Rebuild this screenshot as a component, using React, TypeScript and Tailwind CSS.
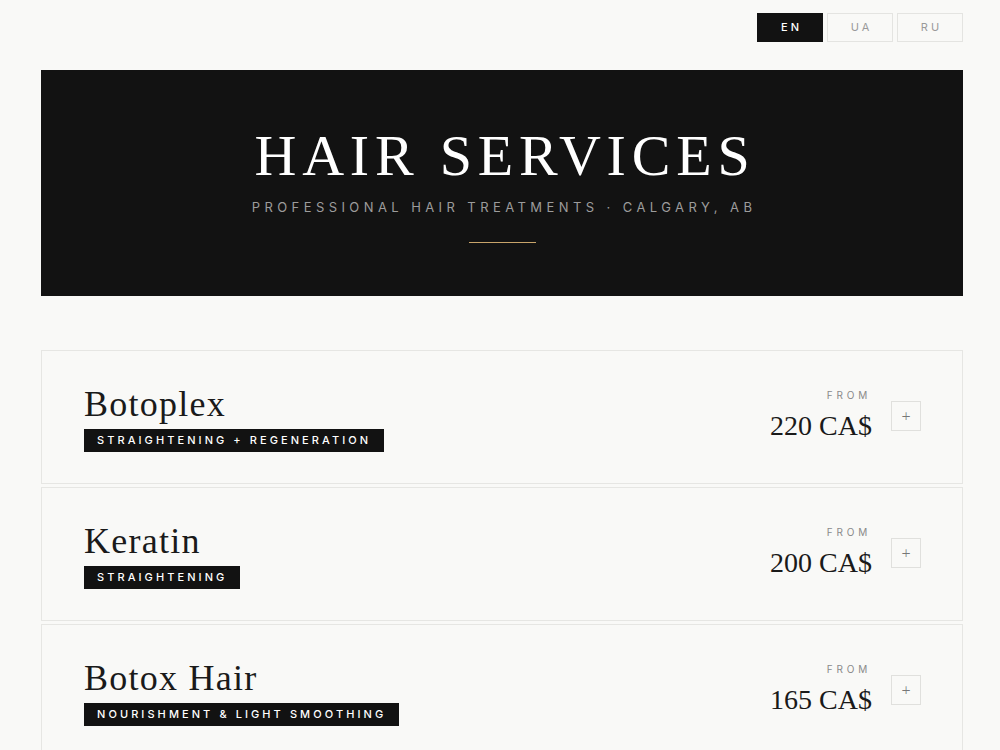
import { useState } from "react";

type Service = {
  name: string;
  tag: string;
  price: number;
};

const services: Service[] = [
  { name: "Botoplex", tag: "Straightening + Regeneration", price: 220 },
  { name: "Keratin", tag: "Straightening", price: 200 },
  { name: "Botox Hair", tag: "Nourishment & Light Smoothing", price: 165 },
];

const langs = ["EN", "UA", "RU"];

const serif = "font-['Liberation_Serif',serif]";
const sans = "font-['Inter','DejaVu_Sans',sans-serif]";

function LangSwitch() {
  const [lang, setLang] = useState("EN");
  return (
    <div className="flex justify-end gap-[4px] pt-[13px]">
      {langs.map((l) => (
        <button
          key={l}
          onClick={() => setLang(l)}
          className={`${sans} h-[29px] w-[66px] border text-[11px] tracking-[0.28em] pl-[3px] ${
            l === lang
              ? "bg-[#121212] border-[#121212] text-white font-medium"
              : "bg-[#f9f9f7] border-[#e4e4e1] text-[#9a9a9a]"
          }`}
        >
          {l}
        </button>
      ))}
    </div>
  );
}

function ServiceCard({ s }: { s: Service }) {
  return (
    <div className="flex h-[134px] items-center justify-between border border-[#e6e6e3] bg-[#f9f9f7] pl-[42px] pr-[41px]">
      <div className="flex flex-col items-start">
        <h2 className={`${serif} text-[36px] leading-[44px] tracking-[0.035em] text-[#1a1a1a]`}>{s.name}</h2>
        <span
          className={`${sans} mt-[3px] bg-[#121212] px-[13px] py-[5px] text-[11px] font-medium uppercase leading-[13px] tracking-[0.28em] text-white`}
        >
          {s.tag}
        </span>
      </div>
      <div className="flex items-center gap-[19px]">
        <div className="flex flex-col items-end">
          <span className={`${sans} text-[10px] tracking-[0.38em] text-[#8a8a8a] mr-[1px] -mt-[3px]`}>FROM</span>
          <span className={`${serif} text-[28px] leading-[34px] text-[#1a1a1a] mt-[6px]`}>{s.price} CA$</span>
        </div>
        <button className="flex h-[30px] w-[30px] items-center justify-center border border-[#e0e0dd] text-[16px] font-light text-[#777] mb-[2px]">
          +
        </button>
      </div>
    </div>
  );
}

export default function App() {
  return (
    <div className="min-h-screen bg-[#f9f9f7]">
      <div className="ml-[41px] w-[922px]">
        <LangSwitch />
        <header className="mt-[28px] flex h-[226px] flex-col items-center bg-[#121212] pt-[57px]">
          <h1 className={`${serif} text-[58px] leading-[58px] tracking-[0.1em] text-white pl-[6px]`}>HAIR SERVICES</h1>
          <p className={`${sans} mt-[13px] text-[13px] tracking-[0.34em] text-[#9c9c9c] pl-[4px]`}>
            PROFESSIONAL HAIR TREATMENTS · CALGARY, AB
          </p>
          <div className="mt-[24px] h-px w-[67px] bg-[#c8a46a]" />
        </header>
        <div className="mt-[54px] flex flex-col gap-[3px]">
          {services.map((s) => (
            <ServiceCard key={s.name} s={s} />
          ))}
        </div>
      </div>
    </div>
  );
}
